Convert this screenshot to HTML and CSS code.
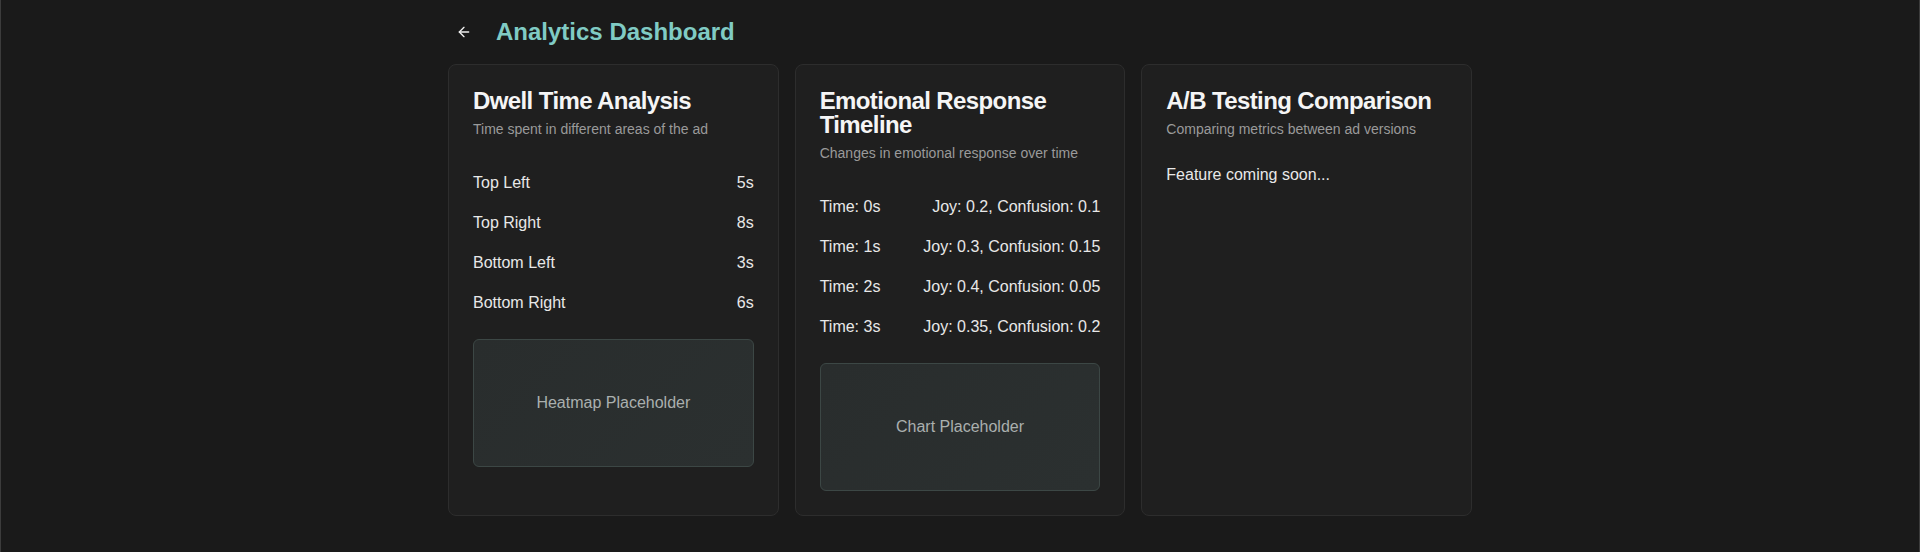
FILE: index.html
```html
<!DOCTYPE html>
<html lang="en">
<head>
<meta charset="utf-8">
<title>Analytics Dashboard</title>
<link rel="stylesheet" href="styles.css">
</head>
<body>
<div class="page">
  <main class="container">
    <header class="top">
      <button class="back" aria-label="Back">
        <svg width="16" height="16" viewBox="0 0 24 24" fill="none" stroke="currentColor" stroke-width="2" stroke-linecap="round" stroke-linejoin="round"><path d="m12 19-7-7 7-7"/><path d="M19 12H5"/></svg>
      </button>
      <h1 class="page-title">Analytics Dashboard</h1>
    </header>
    <section class="grid">
      <div class="card">
        <div class="card-header">
          <h2 class="card-title">Dwell Time Analysis</h2>
          <p class="card-desc">Time spent in different areas of the ad</p>
        </div>
        <div class="card-content">
          <div class="row"><span>Top Left</span><span>5s</span></div>
          <div class="row"><span>Top Right</span><span>8s</span></div>
          <div class="row"><span>Bottom Left</span><span>3s</span></div>
          <div class="row"><span>Bottom Right</span><span>6s</span></div>
          <div class="placeholder">Heatmap Placeholder</div>
        </div>
      </div>
      <div class="card">
        <div class="card-header">
          <h2 class="card-title">Emotional Response Timeline</h2>
          <p class="card-desc">Changes in emotional response over time</p>
        </div>
        <div class="card-content">
          <div class="row"><span>Time: 0s</span><span>Joy: 0.2, Confusion: 0.1</span></div>
          <div class="row"><span>Time: 1s</span><span>Joy: 0.3, Confusion: 0.15</span></div>
          <div class="row"><span>Time: 2s</span><span>Joy: 0.4, Confusion: 0.05</span></div>
          <div class="row"><span>Time: 3s</span><span>Joy: 0.35, Confusion: 0.2</span></div>
          <div class="placeholder">Chart Placeholder</div>
        </div>
      </div>
      <div class="card">
        <div class="card-header">
          <h2 class="card-title">A/B Testing Comparison</h2>
          <p class="card-desc">Comparing metrics between ad versions</p>
        </div>
        <div class="card-content">
          <p class="soon">Feature coming soon...</p>
        </div>
      </div>
    </section>
  </main>
</div>
</body>
</html>
```
FILE: styles.css
```css
* { box-sizing: border-box; }
html, body { margin: 0; padding: 0; }
body {
  background: #1a1a1a;
  color: #e6e6e6;
  font-family: "Liberation Sans", Arial, sans-serif;
}
.page {
  min-height: 100vh;
  border-left: 1px solid #3c3c3c;
  border-right: 1px solid #3c3c3c;
}
.container {
  max-width: 1024px;
  margin: 0 auto;
  padding: 16px 0;
}
.top {
  display: flex;
  align-items: center;
  gap: 16px;
  margin-bottom: 16px;
}
.back {
  width: 32px;
  height: 32px;
  padding: 8px;
  border: 0;
  background: transparent;
  color: #f0f0f0;
  display: flex;
  align-items: center;
  justify-content: center;
}
.page-title {
  margin: 0;
  font-size: 24px;
  line-height: 32px;
  font-weight: 700;
  color: #80cbc4;
}
.grid {
  display: grid;
  grid-template-columns: repeat(3, 1fr);
  gap: 16px;
}
.card {
  background: #1f1f1f;
  border: 1px solid #2d2d2d;
  border-radius: 8px;
}
.card-header {
  padding: 24px;
  display: flex;
  flex-direction: column;
  gap: 6px;
}
.card-title {
  margin: 0;
  font-size: 24px;
  line-height: 24px;
  font-weight: 700;
  letter-spacing: -0.6px;
  color: #f5f5f5;
}
.card-desc {
  margin: 0;
  font-size: 14px;
  line-height: 20px;
  color: #9a9a9a;
}
.card-content {
  padding: 0 24px 24px;
}
.row {
  display: flex;
  justify-content: space-between;
  padding: 8px 0;
  font-size: 16px;
  line-height: 24px;
  color: #e8e8e8;
}
.placeholder {
  margin-top: 16px;
  height: 128px;
  border: 1px solid #3c4745;
  border-radius: 6px;
  background: linear-gradient(135deg, #292d2d, #2b3030);
  display: flex;
  align-items: center;
  justify-content: center;
  font-size: 16px;
  color: #aab0ae;
}
.soon {
  margin: 0;
  font-size: 16px;
  line-height: 24px;
  color: #e8e8e8;
}
```
